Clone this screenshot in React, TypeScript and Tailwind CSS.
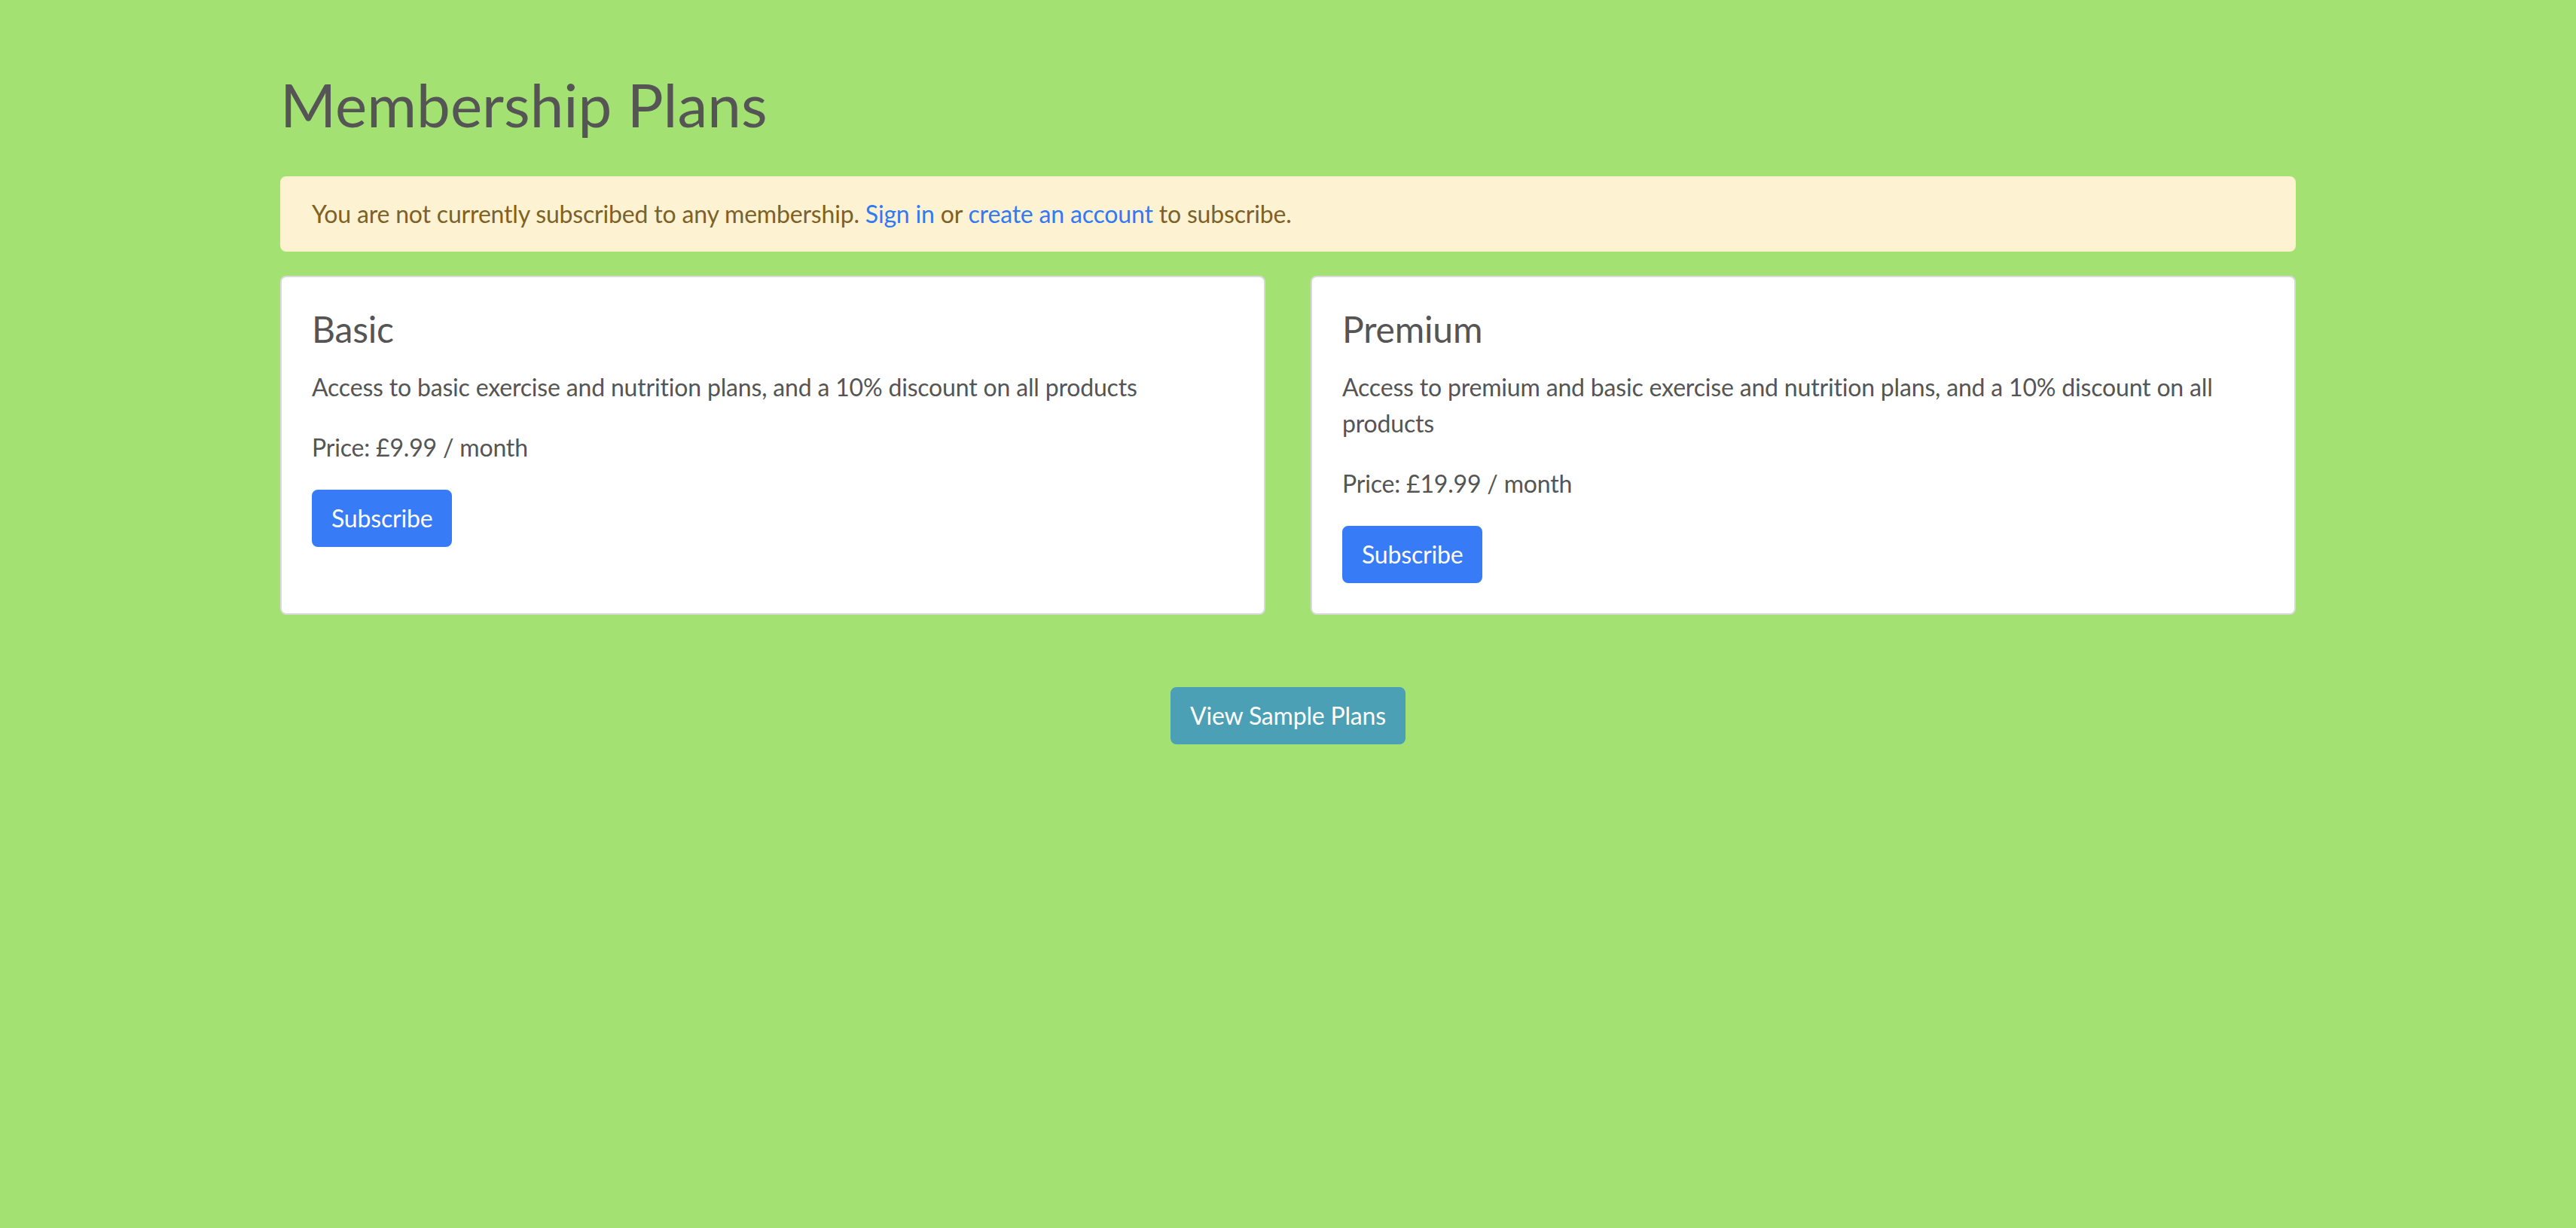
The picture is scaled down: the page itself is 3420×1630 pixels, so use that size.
export default function App() {
  return (
    <div className="min-h-[1630px] bg-[#a3e272] font-['Lato','Liberation_Sans',sans-serif] text-[#555555]">
      <div className="mx-auto w-[2676px] pt-[90px]">
        <h1 className="mb-[48px] text-[80px] leading-[1.2] font-normal">Membership Plans</h1>

        <div className="mb-[32px] rounded-[8px] border-2 border-[#fdf1cc] bg-[#fdf2d1] px-[40px] py-[24px] text-[32px] leading-[1.5] tracking-[-0.18px] text-[#7d6127]">
          You are not currently subscribed to any membership.{' '}
          <a href="#" className="text-[#3179f5]">Sign in</a> or{' '}
          <a href="#" className="text-[#3179f5]">create an account</a> to subscribe.
        </div>

        <div className="flex gap-[60px]">
          <PlanCard
            name="Basic"
            description="Access to basic exercise and nutrition plans, and a 10% discount on all products"
            price="£9.99"
          />
          <PlanCard
            name="Premium"
            description="Access to premium and basic exercise and nutrition plans, and a 10% discount on all products"
            price="£19.99"
          />
        </div>

        <div className="mt-[96px] flex justify-center">
          <button className="rounded-[8px] border-2 border-[#4ba0b6] bg-[#4ba0b6] px-[24px] py-[12px] text-[32px] leading-[1.5] tracking-[-0.18px] text-white">
            View Sample Plans
          </button>
        </div>
      </div>
    </div>
  );
}

function PlanCard({ name, description, price }: { name: string; description: string; price: string }) {
  return (
    <div className="flex-1 rounded-[8px] border-2 border-[#dadada] bg-white p-[40px] tracking-[-0.18px]">
      <h4 className="mb-[24px] text-[48px] leading-[1.2] font-normal">{name}</h4>
      <p className="mb-[32px] text-[32px] leading-[1.5]">{description}</p>
      <p className="mb-[32px] text-[32px] leading-[1.5]">Price: {price} / month</p>
      <button className="rounded-[8px] border-2 border-[#377bf7] bg-[#377bf7] px-[24px] py-[12px] text-[32px] leading-[1.5] text-white">
        Subscribe
      </button>
    </div>
  );
}
